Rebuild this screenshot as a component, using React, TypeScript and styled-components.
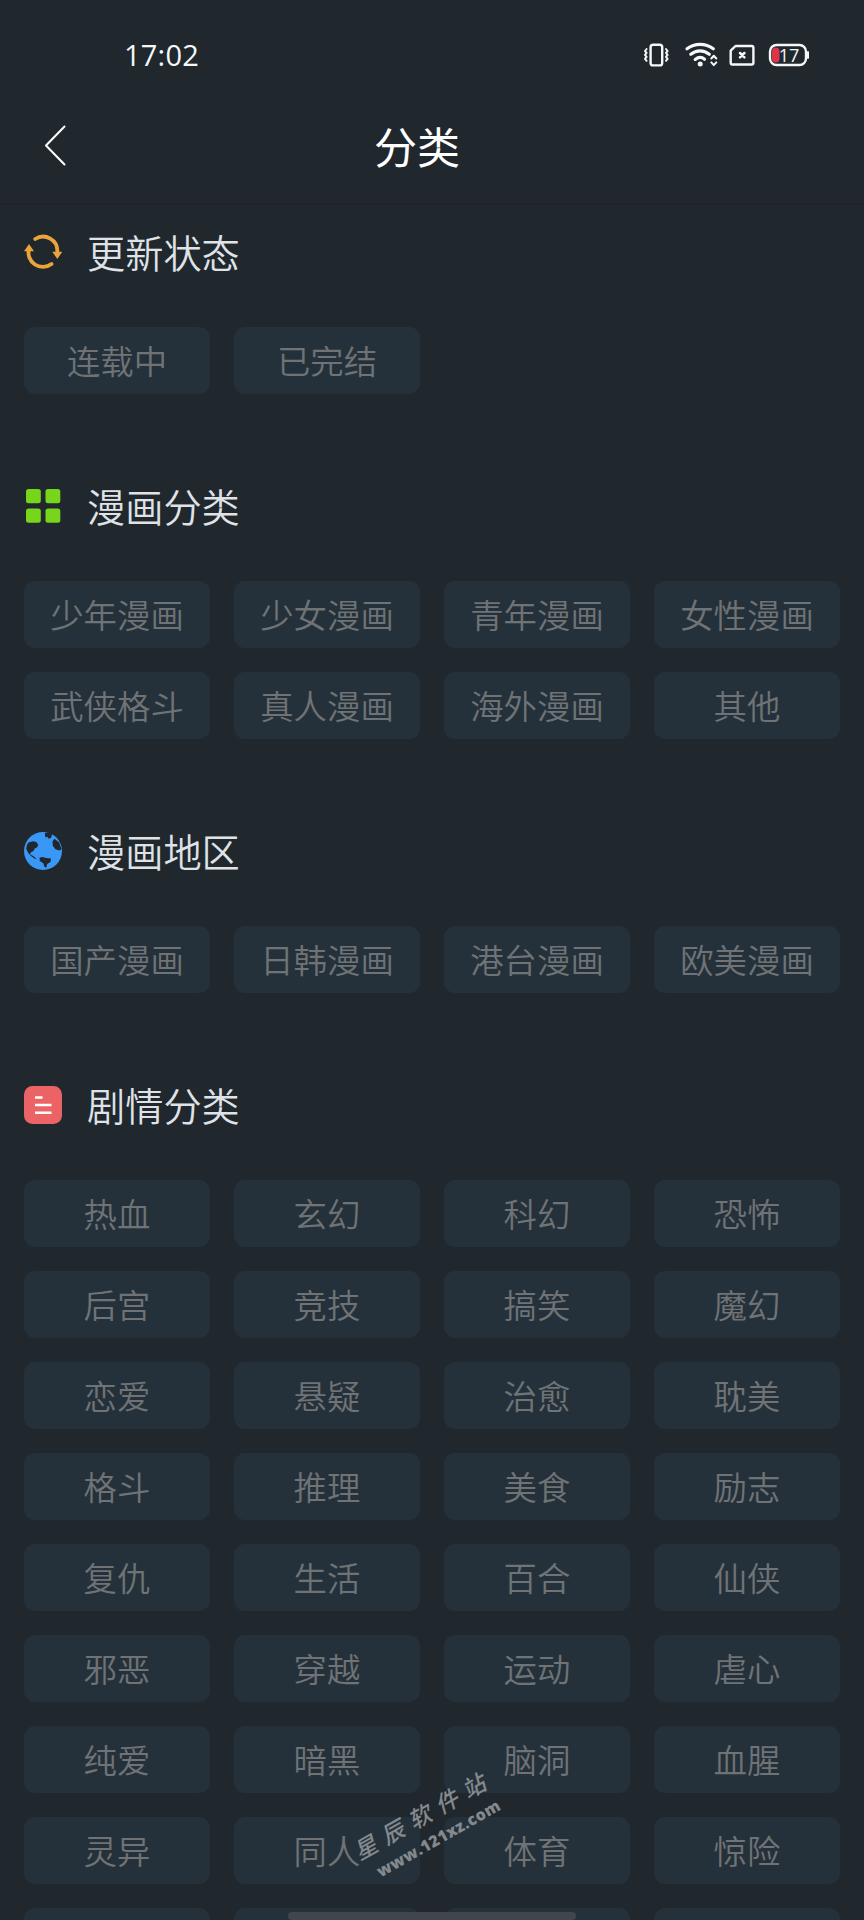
import React from "react";
import styled, { createGlobalStyle } from "styled-components";

const GlobalStyle = createGlobalStyle`
  html, body { margin: 0; background: #20272d; }
  * { box-sizing: border-box; }
`;

const Screen = styled.main`
  position: relative;
  width: 864px;
  height: 1920px;
  overflow: hidden;
  background: #20272d;
  font-family: "Noto Sans CJK SC", "Noto Sans", sans-serif;
`;

const StatusBar = styled.div`
  display: flex;
  align-items: center;
  justify-content: space-between;
  height: 110px;
  padding: 0 55px 0 124px;
  color: #f5f7f9;
`;

const Clock = styled.span`
  font: 400 29px/40px "Open Sans", sans-serif;
  letter-spacing: 0.2px;
`;

const TitleBar = styled.header`
  display: grid;
  grid-template-columns: 90px 1fr 120px;
  align-items: center;
  height: 95px;
  padding-bottom: 21px;
  border-bottom: 2px solid #1e242a;
`;

const BackButton = styled.button`
  display: flex;
  height: 72px;
  padding: 0 0 0 43px;
  align-items: center;
  border: 0;
  background: none;
`;

const Title = styled.h1`
  margin: 0 0 2px;
  color: #fff;
  font-size: 43px;
  font-weight: 400;
  line-height: 70px;
  text-align: center;
`;

const Section = styled.section`
  padding: 0 24px 65px;
`;

const SectionHeader = styled.div`
  display: flex;
  align-items: center;
  height: 100px;
  gap: 25px;
  margin-bottom: 22px;
`;

const SectionIcon = styled.svg`
  display: block;
  width: 38px;
  height: 40px;
  margin-bottom: 6px;
`;

const SectionTitle = styled.h2`
  margin: 0 0 6px;
  color: #dfe2e7;
  font-size: 38.2px;
  font-weight: 350;
  line-height: 56px;
`;

const ChipGrid = styled.div`
  display: grid;
  grid-template-columns: repeat(4, 186px);
  grid-auto-rows: 67px;
  gap: 24px;
`;

const Chip = styled.button`
  display: flex;
  align-items: center;
  justify-content: center;
  padding: 0 0 2px;
  border: 0;
  border-radius: 11px;
  background: #25313a;
  color: #6f7376;
  font-family: inherit;
  font-size: 33.4px;
  font-weight: 350;
  line-height: 48px;
`;

const Watermark = styled.div`
  position: absolute;
  left: 341px;
  top: 1796px;
  width: 180px;
  color: #84898d;
  transform: rotate(-29.5deg);
  text-align: center;
  pointer-events: none;
`;

const WatermarkName = styled.div`
  margin-left: -4px;
  font: italic 500 23px/30px "Noto Sans CJK SC", serif;
  letter-spacing: 8px;
  white-space: nowrap;
`;

const WatermarkSite = styled.div`
  font: 800 16px/28px "Open Sans", sans-serif;
  letter-spacing: 0.4px;
  white-space: nowrap;
`;

const HomeIndicator = styled.div`
  position: absolute;
  left: 288px;
  top: 1912px;
  width: 288px;
  height: 8px;
  border-radius: 4px;
  background: #40464b;
`;

const StatusIcons = () => (
  <svg width="168" height="30" viewBox="0 0 168 30" fill="none" stroke="#f5f7f9" strokeWidth="2.4" strokeLinecap="round" strokeLinejoin="round">
    <rect x="9.6" y="4.8" width="11.6" height="20.6" rx="2.5" />
    <path d="M5.6 9 4 11l1.6 1.9L4 14.900l1.600 1.900L4 18.800l1.600 2M25 9l1.600 2-1.600 1.900 1.600 2-1.600 1.900 1.600 2-1.600 2" strokeWidth="2" />
    <path d="M46 8.800c7.800-6 18.500-6 26.300 0M49.800 14.300c5.600-4.600 12.900-4.600 18.500 0M54.200 19.400c3.100-2.400 6.700-2.400 9.300-.2" strokeWidth="3.200" />
    <circle cx="59.200" cy="24" r="2.500" fill="#f5f7f9" stroke="none" />
    <path d="m70.300 18.500 2.500-2.700 2.500 2.700M70.300 22.400l2.500 2.700 2.500-2.700" strokeWidth="2" />
    <path d="M94.500 6h16.200q1.700 0 1.700 1.700v15.100q0 1.700-1.700 1.700H91.400q-1.700 0-1.700-1.700V10.700z" />
    <path d="m99 13 4.400 4.400m0-4.400L99 17.400" strokeWidth="2.500" />
    <rect x="129" y="5" width="36" height="20" rx="6.500" />
    <path d="M167 12.500v5" strokeWidth="2.600" />
    <rect x="131" y="7.400" width="7.500" height="15.200" rx="3.500" fill="#dc3548" stroke="none" />
    <text x="137.800" y="21.500" fill="#f5f7f9" stroke="none" fontFamily="Open Sans, sans-serif" fontSize="18">17</text>
  </svg>
);

const RefreshIcon = () => (
  <SectionIcon viewBox="0 0 38 40" fill="none" stroke="#e9a53b" strokeWidth="3.8" strokeLinecap="round">
    <path d="M11.200 7A14.300 14.300 0 0 1 33.300 20" />
    <path d="M27.500 32A14.300 14.300 0 0 1 5 17" />
    <path d="M28.300 19.800h10L33.300 27zM0 19.200h10L5 12z" fill="#e9a53b" stroke="none" />
  </SectionIcon>
);

const GridIcon = () => (
  <SectionIcon viewBox="0 0 38 40" fill="#77d51b">
    {[2, 21.5].map((x) => [3, 22.5].map((y) => <rect key={`${x}-${y}`} x={x} y={y} width="14.8" height="14.3" rx="2.5" />))}
  </SectionIcon>
);

const GlobeIcon = () => (
  <SectionIcon viewBox="0 0 38 40">
    <circle cx="19" cy="20" r="19" fill="#3a97f6" />
    <path
      fill="#20272d"
      d="M4.500 11.500 9 10.300l3.200.8 2 2.700-1 2.500-2.500 1.200-1 2.300-3 1.600-.5 2 3 1.500 3.500 3.200-2-.4-3.700-2.600L4 21.500l-1.800-3.800.8-4zM21 2l3-.7 4 1.800-.8 3.600-2.700 1.100-.8-2-2 .6-.8-2zM28.500 10.500l2-2.700 4.700 3.700 2.300 6.700-2.300 1.300-3.700-1.300-2.700-3.500zM15.500 26.700l3-.7 3.500 1 5 .5-.5 3.500-3.300 2-1 3.700-1.700-1-1.200-3.500-3.500-2.200z"
    />
  </SectionIcon>
);

const StoryIcon = () => (
  <SectionIcon viewBox="0 0 38 40">
    <rect y="1" width="38" height="38" rx="8.5" fill="#eb6365" />
    <path d="M11 12.500h7.500M11 20h16.500M11 27.800h16.500" stroke="#fff" strokeWidth="2.4" />
  </SectionIcon>
);

const sections = [
  { title: "更新状态", Icon: RefreshIcon, items: "连载中 已完结" },
  { title: "漫画分类", Icon: GridIcon, items: "少年漫画 少女漫画 青年漫画 女性漫画 武侠格斗 真人漫画 海外漫画 其他" },
  { title: "漫画地区", Icon: GlobeIcon, items: "国产漫画 日韩漫画 港台漫画 欧美漫画" },
  {
    title: "剧情分类",
    Icon: StoryIcon,
    items:
      "热血 玄幻 科幻 恐怖 后宫 竞技 搞笑 魔幻 恋爱 悬疑 治愈 耽美 格斗 推理 美食 励志 复仇 生活 百合 仙侠 邪恶 穿越 运动 虐心 纯爱 暗黑 脑洞 血腥 灵异 同人 体育 惊险",
  },
];

export default function App() {
  return (
    <Screen>
      <GlobalStyle />
      <StatusBar>
        <Clock>17:02</Clock>
        <StatusIcons />
      </StatusBar>
      <TitleBar>
        <BackButton aria-label="返回">
          <svg width="24" height="44" viewBox="0 0 24 44" fill="none" stroke="#fff" strokeWidth="2" strokeLinecap="round" strokeLinejoin="round">
            <path d="M21.500 2.500 3 21.500l18.500 19" />
          </svg>
        </BackButton>
        <Title>分类</Title>
      </TitleBar>
      {sections.map(({ title, Icon, items }) => (
        <Section key={title}>
          <SectionHeader>
            <Icon />
            <SectionTitle>{title}</SectionTitle>
          </SectionHeader>
          <ChipGrid>
            {items.split(" ").map((label) => (
              <Chip key={label}>{label}</Chip>
            ))}
            {title === "剧情分类" && [0, 1, 2, 3].map((n) => <Chip key={n} aria-hidden />)}
          </ChipGrid>
        </Section>
      ))}
      <Watermark>
        <WatermarkName>星辰软件站</WatermarkName>
        <WatermarkSite>www.121xz.com</WatermarkSite>
      </Watermark>
      <HomeIndicator />
    </Screen>
  );
}
